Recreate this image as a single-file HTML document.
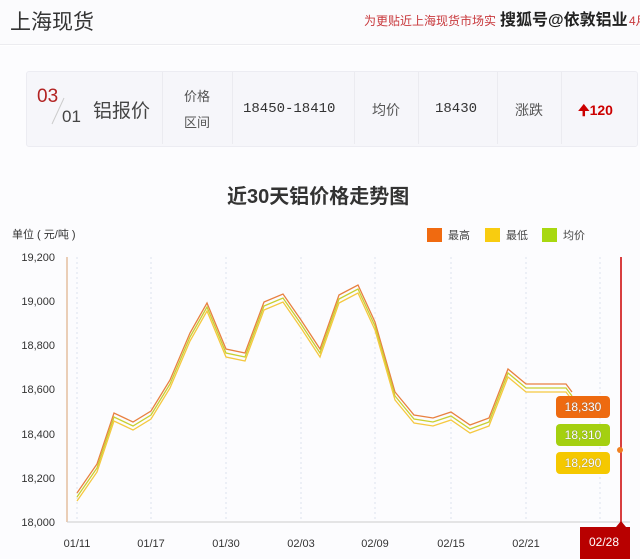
<!DOCTYPE html>
<html><head><meta charset="utf-8"><style>
body{margin:0;width:640px;height:559px;overflow:hidden;background:#fff;font-family:"Liberation Sans","Noto Sans CJK SC",sans-serif;position:relative}
.abs{position:absolute;white-space:nowrap}
.dv{position:absolute;top:72px;width:1px;height:72px;background:#ebebf0}
</style></head><body>
<div class="abs" style="left:0;top:0;width:640px;height:44px;background:#fbfbfd;border-bottom:1px solid #ececf0"></div>
<div class="abs" style="left:10px;top:6px;font-size:21px;color:#333">上海现货</div>
<div class="abs" style="left:364px;top:12px;font-size:12px;color:#c8383c">为更贴近上海现货市场实</div>
<div class="abs" style="left:500px;top:6px;font-size:16px;color:#222;font-weight:bold;text-shadow:0 0 2px #fff">搜狐号@依敦铝业</div>
<div class="abs" style="left:629px;top:12px;font-size:12px;color:#c8383c">4月</div>
<div class="abs" style="left:0;top:46px;width:640px;height:513px;background:#fcfcfe"></div>
<div class="abs" style="left:26px;top:71px;width:610px;height:74px;background:#f6f6fa;border:1px solid #ececf2;border-radius:3px"></div>
<div class="dv" style="left:162px"></div><div class="dv" style="left:232px"></div><div class="dv" style="left:354px"></div><div class="dv" style="left:418px"></div><div class="dv" style="left:497px"></div><div class="dv" style="left:561px"></div>
<div class="abs" style="left:37px;top:86px;font-size:19px;color:#b22222">03</div>
<div class="abs" style="left:62px;top:107px;font-size:17px;color:#444">01</div>
<svg class="abs" style="left:50px;top:96px" width="16" height="30"><line x1="14" y1="2" x2="2" y2="28" stroke="#ccc"/></svg>
<div class="abs" style="left:93px;top:96px;font-size:19px;color:#444">铝报价</div>
<div class="abs" style="left:184px;top:84px;font-size:13px;color:#555;line-height:26px">价格<br>区间</div>
<div class="abs" style="left:243px;top:101px;font-size:14px;color:#333;font-family:'Liberation Mono',monospace">18450-18410</div>
<div class="abs" style="left:372px;top:100px;font-size:14px;color:#555">均价</div>
<div class="abs" style="left:435px;top:101px;font-size:14px;color:#333;font-family:'Liberation Mono',monospace">18430</div>
<div class="abs" style="left:515px;top:100px;font-size:14px;color:#555">涨跌</div>
<div class="abs" style="left:578px;top:100px;font-size:14px;color:#c00;font-weight:bold">🠉120</div>
<div class="abs" style="left:227px;top:180px;font-size:20px;color:#333;font-weight:bold">近30天铝价格走势图</div>
<div class="abs" style="left:12px;top:226px;font-size:11px;color:#333">单位 ( 元/吨 )</div>
<svg class="abs" style="left:0;top:0" width="640" height="559" font-family="Liberation Sans,sans-serif">
<rect x="427" y="228" width="15" height="14" fill="#f06a10"/><text x="448" y="239" font-size="11" fill="#444" font-family="Noto Sans CJK SC">最高</text>
<rect x="485" y="228" width="15" height="14" fill="#f8cc10"/><text x="506" y="239" font-size="11" fill="#444" font-family="Noto Sans CJK SC">最低</text>
<rect x="542" y="228" width="15" height="14" fill="#a8d810"/><text x="563" y="239" font-size="11" fill="#444" font-family="Noto Sans CJK SC">均价</text>
<g stroke="#dde2ee" stroke-dasharray="2,3">
<line x1="77" y1="257" x2="77" y2="522"/><line x1="151" y1="257" x2="151" y2="522"/><line x1="226" y1="257" x2="226" y2="522"/><line x1="301" y1="257" x2="301" y2="522"/><line x1="375" y1="257" x2="375" y2="522"/><line x1="451" y1="257" x2="451" y2="522"/><line x1="526" y1="257" x2="526" y2="522"/><line x1="600" y1="257" x2="600" y2="522"/>
</g>
<line x1="67" y1="257" x2="67" y2="522" stroke="#d9a070"/>
<line x1="67" y1="522" x2="630" y2="522" stroke="#ccc"/>
<g font-size="11" fill="#333" text-anchor="end">
<text x="55" y="261">19,200</text><text x="55" y="305">19,000</text><text x="55" y="349">18,800</text><text x="55" y="393">18,600</text><text x="55" y="438">18,400</text><text x="55" y="482">18,200</text><text x="55" y="526">18,000</text>
</g>
<g font-size="11" fill="#333" text-anchor="middle">
<text x="77" y="547">01/11</text><text x="151" y="547">01/17</text><text x="226" y="547">01/30</text><text x="301" y="547">02/03</text><text x="375" y="547">02/09</text><text x="451" y="547">02/15</text><text x="526" y="547">02/21</text>
</g>
<g fill="none" stroke-width="1.3">
<polyline stroke="#e88040" points="77,493 97,464 114,413 133,422 151,411 170,380 190,333 207,303 226,349 245,353 264,302 283,294 301,320 320,349 339,295 358,285 375,322 395,392 414,415 433,418 451,412 470,425 489,418 508,369 526,384 546,384 566,384 572,392"/>
<polyline stroke="#c8d030" points="77,497 97,468 114,417 133,426 151,415 170,384 190,337 207,307 226,353 245,357 264,306 283,298 301,324 320,353 339,299 358,289 375,326 395,396 414,419 433,422 451,416 470,429 489,422 508,373 526,388 546,388 566,388 572,396"/>
<polyline stroke="#f5c840" points="77,501 97,472 114,421 133,430 151,419 170,388 190,341 207,311 226,357 245,361 264,310 283,302 301,328 320,357 339,303 358,293 375,330 395,400 414,423 433,426 451,420 470,433 489,426 508,377 526,392 546,392 566,392 572,400"/>
</g>
<line x1="621" y1="257" x2="621" y2="525" stroke="#c00" stroke-width="1.5"/>
<circle cx="620" cy="450" r="3" fill="#f08020"/>
<g font-size="12" fill="#fff" text-anchor="middle" style="text-shadow:0 0 1px #666">
<rect x="556" y="396" width="54" height="22" rx="4" fill="#ee6a10"/><text x="583" y="411">18,330</text>
<rect x="556" y="424" width="54" height="22" rx="4" fill="#a4d010"/><text x="583" y="439">18,310</text>
<rect x="556" y="452" width="54" height="22" rx="4" fill="#f5c800"/><text x="583" y="467">18,290</text>
</g>
<rect x="580" y="527" width="50" height="32" fill="#b80000"/><path d="M616 527 L621 521 L626 527Z" fill="#b80000"/><text x="604" y="546" font-size="12" fill="#fff" text-anchor="middle">02/28</text>
</svg>
</body></html>
